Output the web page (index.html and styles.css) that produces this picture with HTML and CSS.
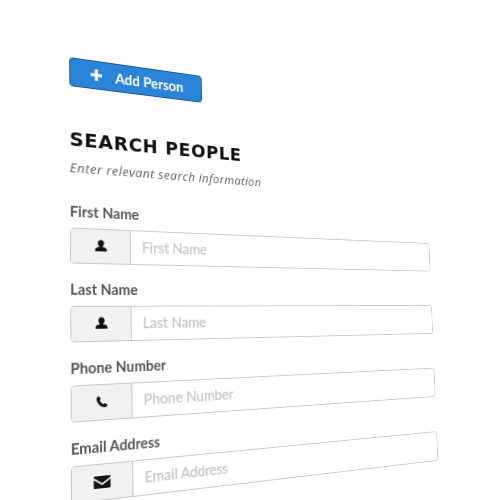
FILE: index.html
```html
<!DOCTYPE html>
<html lang="en">
<head>
<meta charset="utf-8">
<title>Search People</title>
<link rel="stylesheet" href="styles.css">
</head>
<body>
<main class="sheet">
  <button class="add-btn" type="button">
    <svg class="plus" viewBox="0 0 12 12" aria-hidden="true"><path d="M4.400 0h3.200v4.400H12v3.200H7.600V12H4.400V7.600H0V4.400h4.400z"/></svg>
    <span>Add Person</span>
  </button>
  <h1 class="title">SEARCH PEOPLE</h1>
  <p class="subtitle">Enter relevant search information</p>
  <form class="fields">
    <div class="field">
      <label class="field-label">First Name</label>
      <div class="group">
        <span class="addon"><svg class="ico" viewBox="0 0 14 14"><path d="M7 .5c2.200 0 3.400 1.500 3.400 3.500 0 1.500-.7 2.700-1.500 3.400v.6c2 .5 4.600 1.300 4.600 2.900v2.100H.5V10.900C.5 9.300 3.100 8.500 5.100 8v-.6C4.300 6.700 3.600 5.500 3.600 4 3.600 2 4.800.5 7 .5z"/></svg></span>
        <span class="ph">First Name</span>
      </div>
    </div>
    <div class="field">
      <label class="field-label">Last Name</label>
      <div class="group">
        <span class="addon"><svg class="ico" viewBox="0 0 14 14"><path d="M7 .5c2.200 0 3.400 1.500 3.400 3.500 0 1.500-.7 2.700-1.500 3.400v.6c2 .5 4.600 1.300 4.600 2.900v2.100H.5V10.900C.5 9.300 3.100 8.500 5.100 8v-.6C4.300 6.700 3.600 5.500 3.600 4 3.600 2 4.800.5 7 .5z"/></svg></span>
        <span class="ph">Last Name</span>
      </div>
    </div>
    <div class="field">
      <label class="field-label">Phone Number</label>
      <div class="group">
        <span class="addon"><svg class="ico" viewBox="0 0 14 14"><path d="M3.400 1 5.500 3.900 4.300 5.400c.7 1.800 2.300 3.500 4.200 4.400l1.500-1.300 3 2.100c-.5 1.300-1.700 2.400-3 2.400C5.300 13 1 8 1 3.700 1 2.500 2.200 1.300 3.400 1z"/></svg></span>
        <span class="ph">Phone Number</span>
      </div>
    </div>
    <div class="field">
      <label class="field-label">Email Address</label>
      <div class="group">
        <span class="addon"><svg class="ico ico-mail" viewBox="0 0 18 14"><path d="M1.500 1h15c.5 0 1 .4 1 1v.6L9 8 .5 2.600V2c0-.6.5-1 1-1zM.5 4.400 9 10l8.500-5.600V12c0 .6-.5 1-1 1h-15c-.5 0-1-.4-1-1z"/></svg></span>
        <span class="ph">Email Address</span>
      </div>
    </div>
  </form>
</main>
</body>
</html>
```
FILE: styles.css
```css
* { box-sizing: border-box; }
html, body {
  margin: 0;
  height: 500px;
  overflow: hidden;
  background: #fff;
}
.sheet {
  width: 455px;
  font-family: "Lato", sans-serif;
  filter: blur(0.35px);
  transform-origin: 0 0;
  transform: matrix3d(1.04138, 0.17681, 0, 0.00058635,
                      -0.002983, 0.97372, 0, -0.00010222,
                      0, 0, 1, 0,
                      70.4, 58.06, 0, 1.017735);
}
.add-btn {
  display: flex;
  align-items: center;
  width: 146px;
  height: 30px;
  padding: 0 0 0 21px;
  gap: 14px;
  background: #2b84d8;
  border: 1px solid #14569c;
  border-radius: 4px;
  color: #fff;
  font: 700 14.800px "Lato", sans-serif;
}
.plus { width: 12px; height: 12px; fill: #fff; }
.title {
  margin: 44px 0 0;
  font: 700 20px/20px "DejaVu Sans", sans-serif;
  letter-spacing: .7px;
  color: #111;
}
.subtitle {
  margin: 9.500px 0 0;
  font: italic 400 13.500px/18px "Open Sans", sans-serif;
  letter-spacing: .5px;
  color: #5f5f5f;
}
.fields {
  margin-top: 25px;
  display: flex;
  flex-direction: column;
  gap: 15px;
}
.field-label {
  display: block;
  height: 20px;
  margin-bottom: 7px;
  font: 700 14.800px/20px "Lato", sans-serif;
  color: #555;
}
.group {
  display: flex;
  height: 36px;
  border: 1.5px solid #c8c8c8;
  border-radius: 4px;
  background: #fff;
}
.addon {
  flex: 0 0 61.500px;
  display: flex;
  align-items: center;
  justify-content: center;
  background: #f1f1f1;
  border-right: 1.5px solid #c8c8c8;
  border-radius: 3px 0 0 3px;
}
.ico { width: 13px; height: 13px; fill: #111; }
.ico-mail { width: 18px; height: 14px; }
.ph {
  align-self: center;
  padding: 0 0 1px 12.500px;
  font-size: 15.300px;
  font-weight: 400;
  color: #c6c6c6;
  -webkit-text-stroke: .25px #c6c6c6;
}
```
